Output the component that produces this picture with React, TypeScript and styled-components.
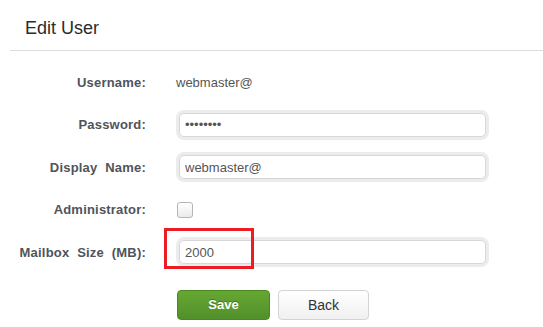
import React from "react";
import styled, { createGlobalStyle } from "styled-components";

const GlobalStyle = createGlobalStyle`
  body {
    margin: 0;
    background: #fff;
    font-family: "Liberation Sans", Arial, sans-serif;
  }
`;

const App = () => {
  return (
    <Page>
      <GlobalStyle />
      <Header>
        <Title>Edit User</Title>
      </Header>
      <Form>
        <Label>Username:</Label>
        <Value>webmaster@</Value>

        <Label>Password:</Label>
        <Cell>
          <Input type="password" defaultValue="password" readOnly />
        </Cell>

        <Label>Display Name:</Label>
        <Cell>
          <Input type="text" defaultValue="webmaster@" readOnly />
        </Cell>

        <Label>Administrator:</Label>
        <Cell>
          <Check type="checkbox" />
        </Cell>

        <Label>Mailbox Size (MB):</Label>
        <Cell>
          <Input type="text" defaultValue="2000" readOnly />
          <Highlight />
        </Cell>

        <span />
        <Actions>
          <SaveButton>Save</SaveButton>
          <BackButton>Back</BackButton>
        </Actions>
      </Form>
    </Page>
  );
};

export default App;

const Page = styled.div`
  width: 543px;
  height: 327px;
  overflow: hidden;
`;

const Header = styled.div`
  margin-left: 10px;
  padding: 18px 0 11px 15px;
  border-bottom: 1px solid #dcdcdc;
`;

const Title = styled.h1`
  margin: 0;
  font-size: 18px;
  line-height: 21px;
  font-weight: normal;
  color: #2b2b2b;
`;

const Form = styled.div`
  display: grid;
  grid-template-columns: 146px 310px;
  grid-auto-rows: 42.5px;
  column-gap: 30px;
  padding-top: 10px;
  align-items: center;
`;

const Label = styled.div`
  text-align: right;
  font-size: 13px;
  font-weight: bold;
  word-spacing: 4px;
  letter-spacing: 0.2px;
  color: #50545a;
`;

const Value = styled.div`
  font-size: 13px;
  color: #555;
`;

const Cell = styled.div`
  position: relative;
  display: flex;
  align-items: center;
`;

const Input = styled.input`
  box-sizing: border-box;
  width: 310px;
  height: 24px;
  margin-left: 3px;
  padding: 0 5px;
  border: 1px solid #d8d8d8;
  border-radius: 5px;
  box-shadow: 0 0 0 3px #ececec;
  font-family: "Liberation Sans", Arial, sans-serif;
  font-size: 13px;
  color: #555;
  outline: none;
`;

const Check = styled.input`
  appearance: none;
  margin: 0 0 0 1px;
  width: 16px;
  height: 16px;
  border: 1px solid #b5b5b5;
  border-radius: 3px;
  background: linear-gradient(#ffffff, #ebebeb);
`;

const Highlight = styled.div`
  position: absolute;
  left: -12px;
  top: -12px;
  width: 90px;
  height: 41px;
  box-sizing: border-box;
  border: 3px solid #ed1c24;
  pointer-events: none;
`;

const Actions = styled.div`
  display: flex;
  gap: 8px;
  margin-left: 1px;
  margin-top: 20px;
`;

const SaveButton = styled.button`
  width: 93px;
  height: 30px;
  border: 1px solid #4a8920;
  border-radius: 4px;
  background: linear-gradient(#66a733, #51902a);
  color: #fff;
  font-family: "Liberation Sans", Arial, sans-serif;
  font-size: 13px;
  font-weight: bold;
  text-shadow: 0 -1px 0 rgba(0, 0, 0, 0.3);
`;

const BackButton = styled.button`
  width: 91px;
  height: 30px;
  border: 1px solid #d4d4d4;
  border-radius: 4px;
  background: linear-gradient(#ffffff, #f0f0f0);
  color: #333;
  font-family: "Liberation Sans", Arial, sans-serif;
  font-size: 14px;
`;
